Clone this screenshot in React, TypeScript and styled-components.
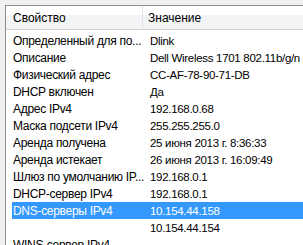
import React from "react";
import styled, { createGlobalStyle } from "styled-components";

const GlobalStyle = createGlobalStyle`
  html, body {
    margin: 0;
    padding: 0;
    background: #f0f0f0;
    overflow: hidden;
  }
  body {
    font-family: "Liberation Sans", Arial, sans-serif;
    font-size: 12px;
    color: #000;
  }
`;

const Frame = styled.div`
  margin: 5px 0 0 5px;
  height: 240px;
  background: #fff;
  border-top: 1px solid #8c8f94;
  border-left: 1px solid #8c8f94;
  overflow: hidden;
`;

const Header = styled.div`
  display: grid;
  grid-template-columns: 137px 1fr;
  height: 23px;
  background: linear-gradient(#ffffff 0, #ffffff 9px, #f3f4f6 9px, #f3f4f6 100%);
  border-bottom: 1px solid #d5d5d5;
  margin-bottom: 2px;
`;

const HeaderCell = styled.div<{ $last?: boolean }>`
  display: flex;
  align-items: center;
  padding-left: ${(p) => (p.$last ? "5px" : "7px")};
  border-right: ${(p) => (p.$last ? "none" : "1px solid #e3e5e8")};
  white-space: nowrap;
`;

const Row = styled.div<{ $selected?: boolean }>`
  display: grid;
  grid-template-columns: 132px 1fr;
  height: 17px;
  align-items: center;
  margin-left: 6px;
  background: ${(p) => (p.$selected ? "#3399ff" : "transparent")};
  color: ${(p) => (p.$selected ? "#fff" : "#000")};
`;

const Cell = styled.div<{ $first?: boolean }>`
  padding-left: ${(p) => (p.$first ? "1px" : "6px")};
  font-size: ${(p) => (p.$first ? "12px" : "11.5px")};
  letter-spacing: ${(p) => (p.$first ? "-0.3px" : "-0.3px")};
  white-space: nowrap;
  overflow: hidden;
`;

const rows: [string, string][] = [
  ["Определенный для по...", "Dlink"],
  ["Описание", "Dell Wireless 1701 802.11b/g/n"],
  ["Физический адрес", "CC-AF-78-90-71-DB"],
  ["DHCP включен", "Да"],
  ["Адрес IPv4", "192.168.0.68"],
  ["Маска подсети IPv4", "255.255.255.0"],
  ["Аренда получена", "25 июня 2013 г. 8:36:33"],
  ["Аренда истекает", "26 июня 2013 г. 16:09:49"],
  ["Шлюз по умолчанию IP...", "192.168.0.1"],
  ["DHCP-сервер IPv4", "192.168.0.1"],
  ["DNS-серверы IPv4", "10.154.44.158"],
  ["", "10.154.44.154"],
  ["WINS-сервер IPv4", ""],
];

export default function App() {
  return (
    <>
      <GlobalStyle />
      <Frame>
        <Header>
          <HeaderCell>Свойство</HeaderCell>
          <HeaderCell $last>Значение</HeaderCell>
        </Header>
        {rows.map(([name, value], i) => (
          <Row key={i} $selected={i === 10}>
            <Cell $first>{name}</Cell>
            <Cell>{value}</Cell>
          </Row>
        ))}
      </Frame>
    </>
  );
}
